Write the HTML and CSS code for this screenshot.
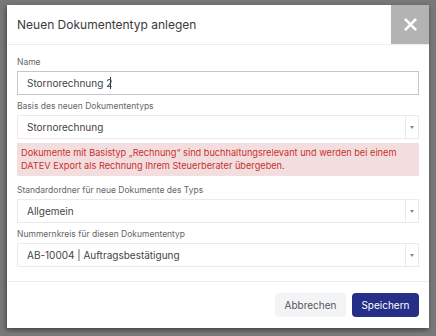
FILE: index.html
```html
<!DOCTYPE html>
<html>
<head>
    <meta charset="UTF-8">
    <title>Neuen Dokumententyp anlegen</title>
    <link rel="stylesheet" href="styles.css">
</head>
<body>
    <div class="modal">
        <div class="modal-header">
            <h3 class="modal-title">Neuen Dokumententyp anlegen</h3>
            <button class="close-button">
                <svg width="13" height="13" viewBox="0 0 14 14">
                    <path d="M2 2 L12 12 M12 2 L2 12" stroke="#fff" stroke-width="2.8" stroke-linecap="square"/>
                </svg>
            </button>
        </div>

        <div class="modal-body">
            <label class="field-label label-first">Name</label>
            <div class="text-input">Stornorechnung 2<span class="caret"></span></div>

            <label class="field-label">Basis des neuen Dokumententyps</label>
            <div class="select-box">
                <span class="select-value">Stornorechnung</span>
                <span class="select-arrow"></span>
            </div>

            <div class="alert">
                Dokumente mit Basistyp „Rechnung“ sind buchhaltungsrelevant und werden bei einem DATEV Export als Rechnung Ihrem Steuerberater übergeben.
            </div>

            <label class="field-label label-after-alert">Standardordner für neue Dokumente des Typs</label>
            <div class="select-box">
                <span class="select-value">Allgemein</span>
                <span class="select-arrow"></span>
            </div>

            <label class="field-label">Nummernkreis für diesen Dokumententyp</label>
            <div class="select-box">
                <span class="select-value">AB-10004 | Auftragsbestätigung</span>
                <span class="select-arrow"></span>
            </div>
        </div>

        <div class="modal-footer">
            <button class="btn btn-cancel">Abbrechen</button>
            <button class="btn btn-save">Speichern</button>
        </div>
    </div>
</body>
</html>
```

FILE: styles.css
```css
body {
    font-family: Inter, "Noto Sans", sans-serif;
    background-color: #787878;
    margin: 0;
    padding: 5px 7px;
}

.modal {
    width: 422px;
    background-color: #ffffff;
    box-shadow: -1px 2px 5px rgba(0,0,0,0.45);
}

.modal-header {
    display: flex;
    align-items: stretch;
    height: 39px;
    border-bottom: 1px solid #ececec;
}

.modal-title {
    flex: 1;
    margin: 0;
    padding-left: 10px;
    display: flex;
    align-items: center;
    font-size: 12px;
    font-weight: 400;
    color: #3a3a3a;
}

.close-button {
    width: 38px;
    border: none;
    background-color: #b3b3b3;
    display: flex;
    align-items: center;
    justify-content: center;
    padding: 0;
}

.modal-body {
    padding: 10px 10px 14px;
    display: flex;
    flex-direction: column;
}

.field-label {
    font-size: 8.5px;
    line-height: 14px;
    color: #666;
    margin-top: 4px;
    margin-bottom: 2px;
}

.label-first {
    margin-top: 0;
}

.label-after-alert {
    margin-top: 7px;
}

.text-input {
    height: 24px;
    box-sizing: border-box;
    border: 1px solid #c6c6c6;
    padding: 0 9px;
    display: flex;
    align-items: center;
    font-size: 10px;
    color: #444;
}

.caret {
    width: 1px;
    height: 12px;
    background: #333;
    margin-left: -2px;
}

.select-box {
    height: 24px;
    box-sizing: border-box;
    border: 1px solid #ebebeb;
    display: flex;
    font-size: 10px;
    color: #444;
}

.select-value {
    flex: 1;
    padding-left: 9px;
    display: flex;
    align-items: center;
}

.select-arrow {
    width: 12px;
    border-left: 1px solid #ebebeb;
    display: flex;
    align-items: center;
    justify-content: center;
}

.select-arrow::after {
    content: '';
    border-left: 2.5px solid transparent;
    border-right: 2.5px solid transparent;
    border-top: 3px solid #888;
}

.alert {
    margin-top: 4px;
    background-color: #f2dede;
    color: #c9302c;
    font-size: 9.2px;
    line-height: 12.5px;
    padding: 4px 4px 4px 4px;
}

.modal-footer {
    border-top: 1px solid #ececec;
    padding: 11px 10px 11px;
    display: flex;
    justify-content: flex-end;
    gap: 6px;
}

.btn {
    height: 24px;
    border: none;
    border-radius: 4px;
    font-family: Inter, "Noto Sans", sans-serif;
    font-size: 10px;
    padding: 0;
}

.btn-cancel {
    background-color: #f3f4f6;
    color: #555;
    width: 71px;
}

.btn-save {
    background-color: #252f87;
    color: #fff;
    width: 67px;
}
```
